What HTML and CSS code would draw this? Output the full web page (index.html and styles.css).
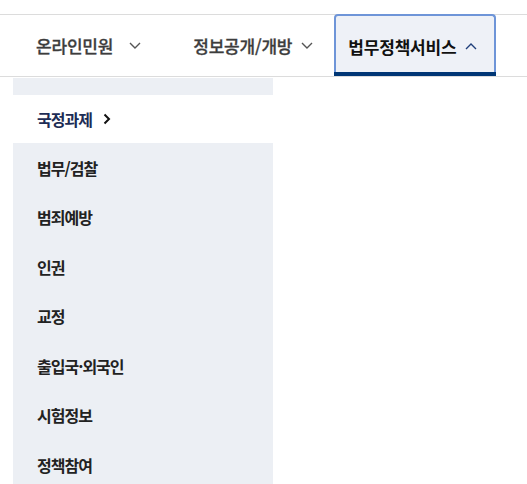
FILE: index.html
```html
<!DOCTYPE html>
<html lang="ko">
<head>
    <meta charset="UTF-8">
    <meta name="viewport" content="width=device-width, initial-scale=1.0">
    <title>법무정책서비스</title>
    <link rel="stylesheet" href="styles.css">
</head>
<body>
    <nav class="gnb">
        <ul class="gnb-list">
            <li class="gnb-item item-civil">
                <a href="#">온라인민원
                    <svg class="caret" width="12" height="7" viewBox="0 0 12 7"><path d="M1 1 L6 6 L11 1"/></svg>
                </a>
            </li>
            <li class="gnb-item item-info">
                <a href="#">정보공개/개방
                    <svg class="caret" width="12" height="7" viewBox="0 0 12 7"><path d="M1 1 L6 6 L11 1"/></svg>
                </a>
            </li>
            <li class="gnb-item item-policy is-active">
                <a href="#">법무정책서비스
                    <svg class="caret" width="12" height="7" viewBox="0 0 12 7"><path d="M1 6 L6 1 L11 6"/></svg>
                </a>
            </li>
        </ul>
    </nav>

    <div class="submenu">
        <div class="submenu-top"></div>
        <ul class="submenu-list">
            <li class="submenu-item is-current">
                <a href="#">국정과제
                    <svg class="arrow" width="8" height="12" viewBox="0 0 8 12"><path d="M1.5 1.5 L6 6 L1.5 10.5"/></svg>
                </a>
            </li>
            <li class="submenu-item"><a href="#">법무/검찰</a></li>
            <li class="submenu-item"><a href="#">범죄예방</a></li>
            <li class="submenu-item"><a href="#">인권</a></li>
            <li class="submenu-item"><a href="#">교정</a></li>
            <li class="submenu-item"><a href="#">출입국·외국인</a></li>
            <li class="submenu-item"><a href="#">시험정보</a></li>
            <li class="submenu-item"><a href="#">정책참여</a></li>
        </ul>
    </div>
</body>
</html>
```

FILE: styles.css
```css
body {
    margin: 0;
    background: #fff;
    font-family: "Noto Sans CJK KR", "Noto Sans", sans-serif;
    color: #222;
}
ul {
    list-style: none;
    margin: 0;
    padding: 0;
}
a {
    color: inherit;
    text-decoration: none;
}
.gnb {
    margin-top: 14px;
    border-top: 1px solid #dcdcdc;
    border-bottom: 1px solid #dcdcdc;
}
.gnb-list {
    display: flex;
    height: 61px;
    padding-left: 22px;
}
.gnb-item a {
    display: flex;
    align-items: center;
    height: 100%;
    padding: 0 14px;
    font-size: 17px;
    font-weight: 500;
    letter-spacing: -0.2px;
    color: #3d3d3d;
    -webkit-text-stroke: 0.3px #3d3d3d;
}
.gnb-item .caret {
    margin-left: 9px;
    fill: none;
    stroke: #555;
    stroke-width: 1.4;
}
.item-civil .caret {
    margin-left: 16px;
}
.item-info {
    margin-left: 24px;
}
.item-policy {
    margin-left: 7px;
}
.gnb-item.is-active {
    position: relative;
    margin-top: -1px;
    height: 62px;
    box-sizing: border-box;
    border: 2px solid #6e95d8;
    border-bottom: 0;
    border-radius: 4px 4px 0 0;
    background: #eef1f7;
}
.gnb-item.is-active::after {
    content: "";
    position: absolute;
    left: -2px;
    right: -2px;
    bottom: 0;
    height: 4px;
    background: #003675;
}
.gnb-item.is-active a {
    padding: 0 17px 0 12px;
    font-weight: 700;
    color: #111;
    -webkit-text-stroke: 0;
}
.gnb-item.is-active .caret {
    stroke: #1f3f7a;
}
.submenu {
    width: 260px;
    margin: 1px 0 0 13px;
    background: #eceff4;
}
.submenu-top {
    height: 17px;
}
.submenu-item a {
    display: flex;
    align-items: center;
    height: 49.5px;
    padding-left: 24px;
    font-size: 16px;
    font-weight: 700;
    letter-spacing: -1px;
    color: #222;
}
.submenu-item.is-current {
    background: #fff;
}
.submenu-item.is-current a {
    height: 48px;
    color: #1d2c55;
}
.submenu-item .arrow {
    margin-left: 11px;
    fill: none;
    stroke: #111;
    stroke-width: 2;
}
```
